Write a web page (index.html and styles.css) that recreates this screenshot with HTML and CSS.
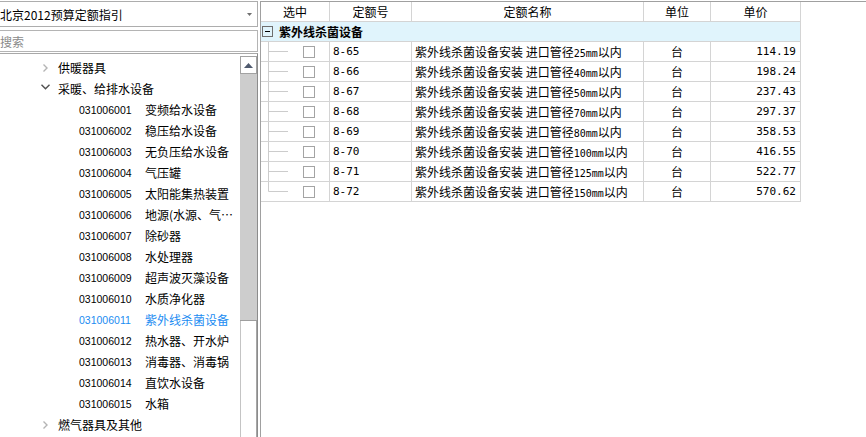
FILE: index.html
```html
<!DOCTYPE html>
<html lang="zh-CN">
<head>
    <meta charset="UTF-8">
    <title>定额指引</title>
    <link rel="stylesheet" href="styles.css">
</head>
<body>
<div class="app">
    <!-- 左侧：定额指引树 -->
    <aside class="side">
        <div class="combo">
            <span>北京2012预算定额指引</span>
            <svg class="combo-arrow" width="5" height="3" viewBox="0 0 5 3"><path d="M0 0H5L2.5 3Z" fill="#707070"/></svg>
        </div>
        <div class="search">搜索</div>
        <div class="tree-box">
            <div class="tree">
                <div class="node l1">
                    <span class="twist"><svg width="8" height="8" viewBox="0 0 8 8"><path d="M2.5 0.5L6 4L2.5 7.5" fill="none" stroke="#b4b4b4" stroke-width="1.4"/></svg></span>
                    <span>供暖器具</span>
                </div>
                <div class="node l1">
                    <span class="twist down"><svg width="9" height="6" viewBox="0 0 9 6"><path d="M0.5 0.8L4.5 4.8L8.5 0.8" fill="none" stroke="#505050" stroke-width="1.4"/></svg></span>
                    <span>采暖、给排水设备</span>
                </div>
                <div class="node l2"><span class="code">031006001</span><span class="name">变频给水设备</span></div>
                <div class="node l2"><span class="code">031006002</span><span class="name">稳压给水设备</span></div>
                <div class="node l2"><span class="code">031006003</span><span class="name">无负压给水设备</span></div>
                <div class="node l2"><span class="code">031006004</span><span class="name">气压罐</span></div>
                <div class="node l2"><span class="code">031006005</span><span class="name">太阳能集热装置</span></div>
                <div class="node l2"><span class="code">031006006</span><span class="name">地源(水源、气源)热泵机组</span></div>
                <div class="node l2"><span class="code">031006007</span><span class="name">除砂器</span></div>
                <div class="node l2"><span class="code">031006008</span><span class="name">水处理器</span></div>
                <div class="node l2"><span class="code">031006009</span><span class="name">超声波灭藻设备</span></div>
                <div class="node l2"><span class="code">031006010</span><span class="name">水质净化器</span></div>
                <div class="node l2 active"><span class="code">031006011</span><span class="name">紫外线杀菌设备</span></div>
                <div class="node l2"><span class="code">031006012</span><span class="name">热水器、开水炉</span></div>
                <div class="node l2"><span class="code">031006013</span><span class="name">消毒器、消毒锅</span></div>
                <div class="node l2"><span class="code">031006014</span><span class="name">直饮水设备</span></div>
                <div class="node l2"><span class="code">031006015</span><span class="name">水箱</span></div>
                <div class="node l1">
                    <span class="twist"><svg width="8" height="8" viewBox="0 0 8 8"><path d="M2.5 0.5L6 4L2.5 7.5" fill="none" stroke="#b4b4b4" stroke-width="1.4"/></svg></span>
                    <span>燃气器具及其他</span>
                </div>
            </div>
            <div class="vscroll">
                <div class="vs-up"><svg width="9" height="5" viewBox="0 0 9 5"><path d="M0 5L4.5 0L9 5Z" fill="#4f5a6e"/></svg></div>
                <div class="vs-thumb"></div>
                <div class="vs-track"></div>
            </div>
        </div>
    </aside>

    <!-- 右侧：定额列表 -->
    <main class="grid-pane">
        <table class="quota">
            <thead>
                <tr>
                    <th class="c-sel">选中</th>
                    <th class="c-code">定额号</th>
                    <th class="c-name">定额名称</th>
                    <th class="c-unit">单位</th>
                    <th class="c-price">单价</th>
                </tr>
            </thead>
            <tbody>
                <tr class="group-row">
                    <td colspan="5" class="group-cell">
                        <div class="group"><span class="fold"></span><b>紫外线杀菌设备</b></div>
                    </td>
                </tr>
                <tr>
                    <td class="sel-cell"><div class="sel"><svg class="branch" width="28" height="19" viewBox="0 0 28 19"><path d="M7.5 0V19M7.5 9.5H27" stroke="#cccccc" fill="none"/></svg><span class="chk"></span></div></td>
                    <td class="num">8-65</td><td>紫外线杀菌设备安装 进口管径<span class="lat">25mm</span>以内</td><td class="unit">台</td><td class="num price">114.19</td>
                </tr>
                <tr>
                    <td class="sel-cell"><div class="sel"><svg class="branch" width="28" height="19" viewBox="0 0 28 19"><path d="M7.5 0V19M7.5 9.5H27" stroke="#cccccc" fill="none"/></svg><span class="chk"></span></div></td>
                    <td class="num">8-66</td><td>紫外线杀菌设备安装 进口管径<span class="lat">40mm</span>以内</td><td class="unit">台</td><td class="num price">198.24</td>
                </tr>
                <tr>
                    <td class="sel-cell"><div class="sel"><svg class="branch" width="28" height="19" viewBox="0 0 28 19"><path d="M7.5 0V19M7.5 9.5H27" stroke="#cccccc" fill="none"/></svg><span class="chk"></span></div></td>
                    <td class="num">8-67</td><td>紫外线杀菌设备安装 进口管径<span class="lat">50mm</span>以内</td><td class="unit">台</td><td class="num price">237.43</td>
                </tr>
                <tr>
                    <td class="sel-cell"><div class="sel"><svg class="branch" width="28" height="19" viewBox="0 0 28 19"><path d="M7.5 0V19M7.5 9.5H27" stroke="#cccccc" fill="none"/></svg><span class="chk"></span></div></td>
                    <td class="num">8-68</td><td>紫外线杀菌设备安装 进口管径<span class="lat">70mm</span>以内</td><td class="unit">台</td><td class="num price">297.37</td>
                </tr>
                <tr>
                    <td class="sel-cell"><div class="sel"><svg class="branch" width="28" height="19" viewBox="0 0 28 19"><path d="M7.5 0V19M7.5 9.5H27" stroke="#cccccc" fill="none"/></svg><span class="chk"></span></div></td>
                    <td class="num">8-69</td><td>紫外线杀菌设备安装 进口管径<span class="lat">80mm</span>以内</td><td class="unit">台</td><td class="num price">358.53</td>
                </tr>
                <tr>
                    <td class="sel-cell"><div class="sel"><svg class="branch" width="28" height="19" viewBox="0 0 28 19"><path d="M7.5 0V19M7.5 9.5H27" stroke="#cccccc" fill="none"/></svg><span class="chk"></span></div></td>
                    <td class="num">8-70</td><td>紫外线杀菌设备安装 进口管径<span class="lat">100mm</span>以内</td><td class="unit">台</td><td class="num price">416.55</td>
                </tr>
                <tr>
                    <td class="sel-cell"><div class="sel"><svg class="branch" width="28" height="19" viewBox="0 0 28 19"><path d="M7.5 0V19M7.5 9.5H27" stroke="#cccccc" fill="none"/></svg><span class="chk"></span></div></td>
                    <td class="num">8-71</td><td>紫外线杀菌设备安装 进口管径<span class="lat">125mm</span>以内</td><td class="unit">台</td><td class="num price">522.77</td>
                </tr>
                <tr>
                    <td class="sel-cell"><div class="sel"><svg class="branch" width="28" height="19" viewBox="0 0 28 19"><path d="M7.5 0V9.5H27" stroke="#cccccc" fill="none"/></svg><span class="chk"></span></div></td>
                    <td class="num">8-72</td><td>紫外线杀菌设备安装 进口管径<span class="lat">150mm</span>以内</td><td class="unit">台</td><td class="num price">570.62</td>
                </tr>
            </tbody>
        </table>
    </main>
</div>
</body>
</html>
```

FILE: styles.css
```css
/* Reset */
* {
    margin: 0;
    padding: 0;
    box-sizing: border-box;
}

body {
    font-family: "Noto Sans CJK SC", "Liberation Sans", sans-serif;
    font-size: 12px;
    color: #000;
    background-color: #fff;
}

.app {
    display: flex;
    height: 437px;
    overflow: hidden;
}

/* Left side */
.side {
    width: 258px;
    flex: none;
    display: flex;
    flex-direction: column;
    padding-top: 1px;
}

.combo {
    height: 26px;
    border: 1px solid #adadad;
    border-left: none;
    display: flex;
    align-items: center;
    justify-content: space-between;
    padding-right: 5px;
    white-space: nowrap;
}

.search {
    height: 22px;
    margin-top: 3px;
    border: 1px solid #b4b4b4;
    border-left: none;
    color: #8a8a8a;
    display: flex;
    align-items: center;
}

.tree-box {
    flex: 1;
    min-height: 0;
    margin-top: 1px;
    border-top: 1px solid #a8a8a8;
    border-right: 1px solid #8c8c8c;
    display: flex;
}

.tree {
    flex: 1;
    padding-top: 3px;
    overflow: hidden;
}

.node {
    height: 21px;
    display: flex;
    align-items: center;
    white-space: nowrap;
}

.node.l1 {
    padding-left: 41px;
}

.twist {
    width: 17px;
    display: flex;
    align-items: center;
}

.twist.down {
    padding-bottom: 3px;
}

.node.l2 {
    padding-left: 79px;
}

.code {
    width: 66px;
    font-family: "Liberation Sans", sans-serif;
    font-size: 10.5px;
}

.name {
    width: 91px;
    overflow: hidden;
    text-overflow: ellipsis;
}

.node.active {
    color: #1b8cf2;
}

/* Tree scrollbar */
.vscroll {
    width: 17px;
    padding-top: 2px;
    display: flex;
    flex-direction: column;
}

.vs-up {
    height: 18px;
    border: 1px solid #a2a2a2;
    display: flex;
    align-items: center;
    justify-content: center;
}

.vs-thumb {
    height: 247px;
    background-color: #cdcdcd;
    border-bottom: 1px solid #9e9e9e;
}

.vs-track {
    flex: 1;
    border-left: 1px solid #c4c4c4;
    border-right: 1px solid #a6a6a6;
}

/* Right side */
.grid-pane {
    flex: 1;
    margin-top: 1px;
    margin-left: 2px;
    border-top: 1px solid #a0a0a0;
    border-left: 1px solid #a0a0a0;
}

.quota {
    border-collapse: separate;
    border-spacing: 0;
    table-layout: fixed;
    width: 540px;
}

.quota tr {
    height: 20px;
}

.quota th,
.quota td {
    height: 20px;
    padding: 0 3px;
    border-right: 1px solid #d4d4d4;
    border-bottom: 1px solid #d4d4d4;
    font-weight: normal;
    line-height: 18px;
    white-space: nowrap;
    overflow: hidden;
}

.quota th {
    text-align: center;
}

.c-sel { width: 69px; }
.c-code { width: 82px; }
.c-name { width: 232px; }
.c-unit { width: 67px; }
.c-price { width: 90px; }

.group-cell {
    background-color: #e0f4fc;
}

.quota td.group-cell {
    padding-left: 1px;
}

.group {
    display: flex;
    align-items: center;
}

.fold {
    width: 11px;
    height: 11px;
    border: 1px solid #6e6e6e;
    display: flex;
    align-items: center;
    justify-content: center;
}

.fold::before {
    content: "";
    width: 5px;
    height: 1px;
    background-color: #000;
}

.group b {
    margin-left: 6px;
    font-weight: bold;
}

.quota td.sel-cell {
    padding: 0;
}

.sel {
    display: flex;
    align-items: center;
}

.branch {
    display: block;
}

.chk {
    width: 12px;
    height: 12px;
    margin-left: 14px;
    border: 1px solid #a4a4a4;
    background-color: #fff;
}

.num {
    font-family: "DejaVu Sans Mono", monospace;
    font-size: 11px;
}

.lat {
    font-family: "DejaVu Sans Mono", monospace;
    font-size: 10px;
    line-height: 10px;
}

.unit {
    text-align: center;
}

.quota td.price {
    text-align: right;
    padding-right: 4px;
}
```
